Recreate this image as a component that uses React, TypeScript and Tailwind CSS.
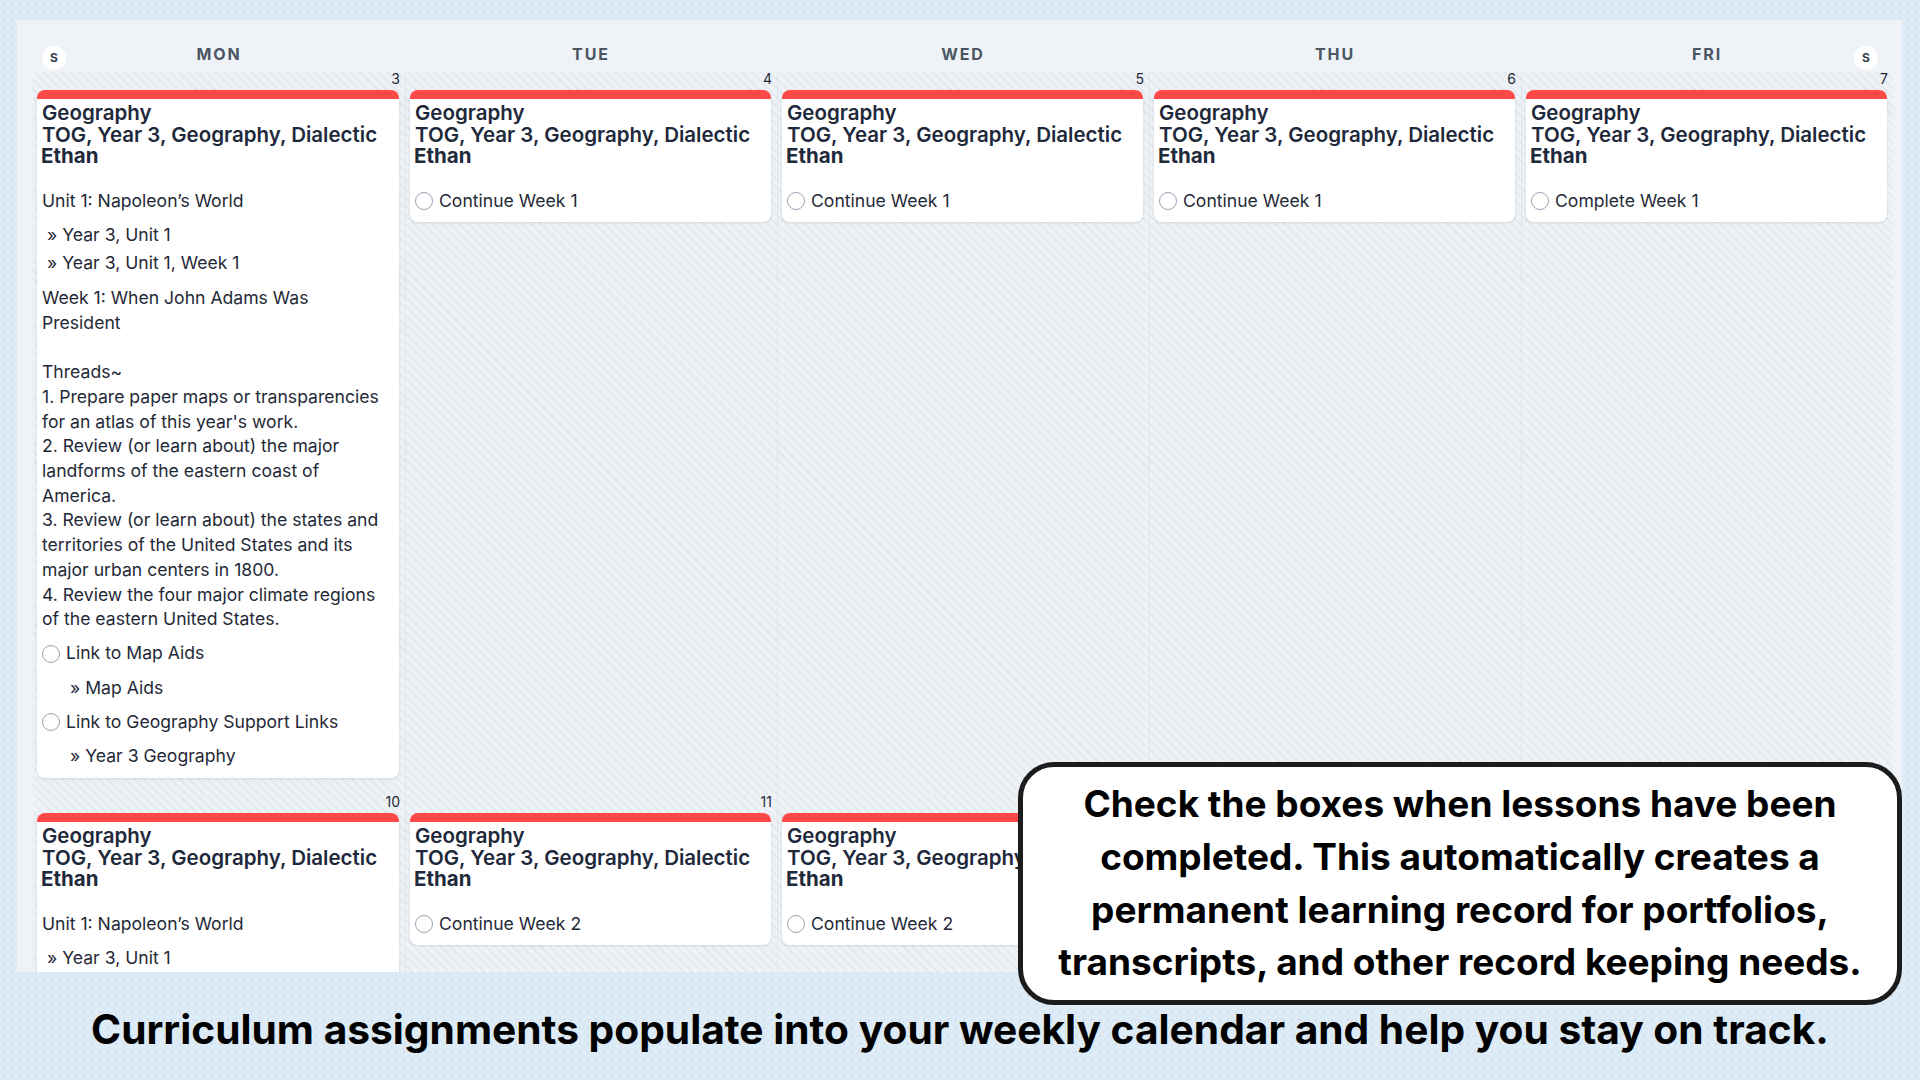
import React from 'react';

type DayItem =
  | { kind: 'unit' }
  | { kind: 'task'; label: string };

type Day = { name: string; dates: [number, number] };

const days: Day[] = [
  { name: 'MON', dates: [3, 10] },
  { name: 'TUE', dates: [4, 11] },
  { name: 'WED', dates: [5, 12] },
  { name: 'THU', dates: [6, 13] },
  { name: 'FRI', dates: [7, 14] },
];

const weekOne: DayItem[] = [
  { kind: 'unit' },
  { kind: 'task', label: 'Continue Week 1' },
  { kind: 'task', label: 'Continue Week 1' },
  { kind: 'task', label: 'Continue Week 1' },
  { kind: 'task', label: 'Complete Week 1' },
];

const weekTwo: DayItem[] = [
  { kind: 'unit' },
  { kind: 'task', label: 'Continue Week 2' },
  { kind: 'task', label: 'Continue Week 2' },
  { kind: 'task', label: 'Continue Week 2' },
  { kind: 'task', label: 'Complete Week 2' },
];

const threads = `Week 1: When John Adams Was President

Threads~
1. Prepare paper maps or transparencies for an atlas of this year's work.
2. Review (or learn about) the major landforms of the eastern coast of America.
3. Review (or learn about) the states and territories of the United States and its major urban centers in 1800.
4. Review the four major climate regions of the eastern United States.`;

function Circle() {
  return <span className="w-[18px] h-[18px] rounded-full border-[1.5px] border-[#9aa5b4] bg-white shrink-0" />;
}

function CheckRow({ label }: { label: string }) {
  return (
    <div className="flex items-center gap-[6px]">
      <Circle />
      <span>{label}</span>
    </div>
  );
}

function UnitBody() {
  return (
    <>
      <div>Unit 1: Napoleon’s World</div>
      <div className="mt-[9.5px] pl-[5px]">» Year 3, Unit 1</div>
      <div className="mt-[4px] pl-[5px]">» Year 3, Unit 1, Week 1</div>
      <div className="mt-[10px] whitespace-pre-line">{threads}</div>
      <div className="mt-[9.5px]">
        <CheckRow label="Link to Map Aids" />
      </div>
      <div className="mt-[9.5px] pl-[28px]">» Map Aids</div>
      <div className="mt-[9.5px]">
        <CheckRow label="Link to Geography Support Links" />
      </div>
      <div className="mt-[9.5px] pl-[28px]">» Year 3 Geography</div>
    </>
  );
}

function LessonCard({ item }: { item: DayItem }) {
  return (
    <div className="ml-[4px] mr-[6px] rounded-[8px] bg-white overflow-hidden shadow-[0_1px_3px_rgba(15,23,42,0.12)]">
      <div className="h-[9px] bg-[#ff4848]" />
      <div className="px-[5px] pt-[3px] pb-[9px]">
        <div className="text-[20.5px] leading-[21.5px] font-semibold text-[#1e293b] whitespace-nowrap">
          <div>Geography</div>
          <div>TOG, Year 3, Geography, Dialectic</div>
          <div className="font-bold -ml-[1px]">Ethan</div>
        </div>
        <div className="mt-[22px] pr-[10px] text-[17.6px] leading-[24.7px] text-[#1f2937]">
          {item.kind === 'unit' ? <UnitBody /> : <CheckRow label={item.label} />}
        </div>
      </div>
    </div>
  );
}

function WeekRow({ items, week, last }: { items: DayItem[]; week: 0 | 1; last?: boolean }) {
  return (
    <div className={`grid grid-cols-5 ${last ? '' : 'h-[723px] border-b border-[#dfe5ec]'}`}>
      {days.map((d, i) => (
        <div
          key={d.name}
          className={`pb-[18px] bg-[repeating-linear-gradient(45deg,#e3e8ef_0_1.5px,#eef2f7_1.5px_6.4px)] ${i > 0 ? 'border-l border-[#dfe5ec]' : ''}`}
        >
          <div className="h-[14px] mb-[4px] pr-[5px] text-right text-[14px] leading-[14px] text-[#1f2937]">
            {d.dates[week]}
          </div>
          <LessonCard item={items[i]} />
        </div>
      ))}
    </div>
  );
}

export default function App() {
  return (
    <div className="relative w-[1920px] h-[1080px] overflow-hidden bg-[#dcebf6] bg-[radial-gradient(#d0dfeb_1px,transparent_1px)] bg-[length:8px_8px] font-['Inter','Liberation_Sans',sans-serif]">
      <div className="pt-[20px] pl-[17px]">
        {/* week calendar panel */}
        <div className="w-[1885px] h-[952px] overflow-hidden bg-[#eff3f8] pl-[16px] pr-[9px]">
          <div className="grid grid-cols-5 h-[52px]">
            {days.map((d, i) => (
              <div key={d.name} className="relative flex justify-center pt-[25px]">
                <span className="text-[16px] leading-[18px] font-bold tracking-[0.12em] text-[#4b5563]">{d.name}</span>
                {i === 0 && (
                  <span className="absolute left-[9px] top-[26px] w-[24px] h-[24px] rounded-full bg-white flex items-center justify-center text-[12px] font-bold text-[#374151]">
                    S
                  </span>
                )}
                {i === 4 && (
                  <span className="absolute right-[15px] top-[26px] w-[24px] h-[24px] rounded-full bg-white flex items-center justify-center text-[12px] font-bold text-[#374151]">
                    S
                  </span>
                )}
              </div>
            ))}
          </div>
          <WeekRow items={weekOne} week={0} />
          <WeekRow items={weekTwo} week={1} last />
        </div>
      </div>

      <p className="mt-[36px] text-center text-[40.7px] leading-[44px] font-bold text-black">
        Curriculum assignments populate into your weekly calendar and help you stay on track.
      </p>

      {/* callout */}
      <div className="absolute left-[1018px] top-[762px] w-[884px] h-[243px] rounded-[36px] border-[5px] border-[#1c1c1c] bg-white flex items-center justify-center">
        <p className="text-center text-[37px] leading-[52.6px] font-bold text-black">
          Check the boxes when lessons have been
          <br />
          completed. This automatically creates a
          <br />
          permanent learning record for portfolios,
          <br />
          transcripts, and other record keeping needs.
        </p>
      </div>
    </div>
  );
}
